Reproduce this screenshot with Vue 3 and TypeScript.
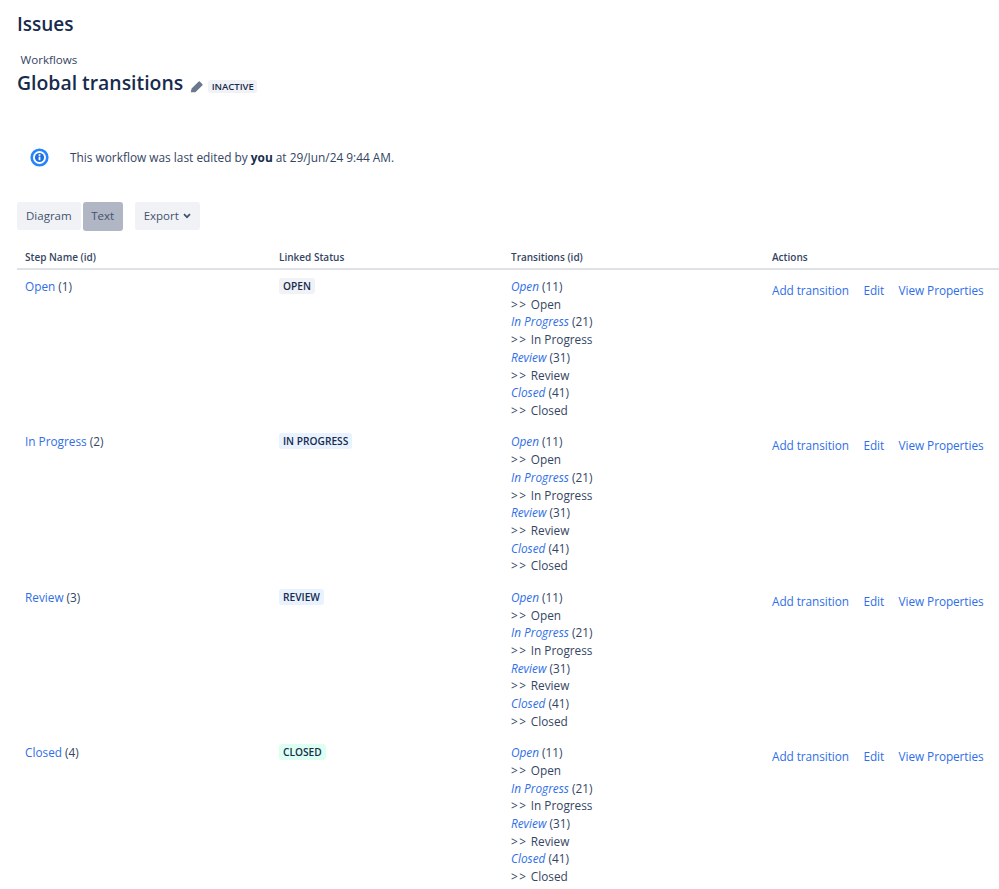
<script setup lang="ts">
interface Step { name: string; id: number; status: string; tone: string }
const steps: Step[] = [
  { name: 'Open', id: 1, status: 'OPEN', tone: 'grey' },
  { name: 'In Progress', id: 2, status: 'IN PROGRESS', tone: 'blue' },
  { name: 'Review', id: 3, status: 'REVIEW', tone: 'blue' },
  { name: 'Closed', id: 4, status: 'CLOSED', tone: 'green' },
]
const transitions = [
  { name: 'Open', id: 11 },
  { name: 'In Progress', id: 21 },
  { name: 'Review', id: 31 },
  { name: 'Closed', id: 41 },
]
</script>

<template>
  <div class="page">
    <h1 class="product">Issues</h1>
    <div class="crumb">Workflows</div>
    <div class="title-row">
      <h2 class="title">Global transitions</h2>
      <svg class="pencil" width="13" height="13" viewBox="0 0 14 14" aria-hidden="true">
        <path d="M.8 13.2l.9-4 7.4-7.4a1.2 1.2 0 0 1 1.7 0l2.4 2.4a1.2 1.2 0 0 1 0 1.7l-7.4 7.4z" fill="#6b778c" />
      </svg>
      <span class="lozenge grey small">INACTIVE</span>
    </div>
    <div class="notice">
      <svg class="info" width="19" height="19" viewBox="0 0 19 19" aria-hidden="true">
        <circle cx="9.5" cy="9.5" r="7.8" fill="#fff" stroke="#2684ff" stroke-width="2.6" />
        <circle cx="9.5" cy="9.5" r="4.6" fill="#1d6fe0" />
        <rect x="8.6" y="8.6" width="1.8" height="3.6" fill="#fff" />
        <rect x="8.6" y="6.2" width="1.8" height="1.7" fill="#fff" />
      </svg>
      <span>This workflow was last edited by <b>you</b> at 29/Jun/24 9:44 AM.</span>
    </div>
    <div class="toolbar">
      <div class="group">
        <button class="btn" type="button">Diagram</button>
        <button class="btn active" type="button">Text</button>
      </div>
      <button class="btn export" type="button">
        Export
        <svg width="8" height="6" viewBox="0 0 8 6" aria-hidden="true">
          <path d="M1 1.2l3 3 3-3" fill="none" stroke="#42526e" stroke-width="1.7" />
        </svg>
      </button>
    </div>
    <table class="grid">
      <colgroup>
        <col class="c1" /><col class="c2" /><col class="c3" /><col />
      </colgroup>
      <thead>
        <tr>
          <th>Step Name (id)</th>
          <th>Linked Status</th>
          <th>Transitions (id)</th>
          <th>Actions</th>
        </tr>
      </thead>
      <tbody>
        <tr v-for="s in steps" :key="s.id">
          <td><a>{{ s.name }}</a> ({{ s.id }})</td>
          <td><span class="lozenge status" :class="s.tone">{{ s.status }}</span></td>
          <td>
            <template v-for="t in transitions" :key="t.id">
              <div><a class="em">{{ t.name }}</a> ({{ t.id }})</div>
              <div><span class="arrows">&gt;&gt;</span> {{ t.name }}</div>
            </template>
          </td>
          <td>
            <div class="actions"><a>Add transition</a><a>Edit</a><a>View Properties</a></div>
          </td>
        </tr>
      </tbody>
    </table>
  </div>
</template>

<style>
html, body { margin: 0; background: #fff; overflow: hidden; }
</style>

<style scoped>
.page {
  width: 999px;
  height: 889px;
  box-sizing: border-box;
  overflow: hidden;
  padding: 11px 0 0 17px;
  font-family: "Open Sans", "Noto Sans", sans-serif;
  font-size: 11.8px;
  line-height: 17.7px;
  color: #172b4d;
}
.product { margin: 0; font-size: 19px; line-height: 26px; font-weight: 600; }
.crumb { margin: 14px 0 0 3.5px; font-size: 11.6px; line-height: 18px; color: #344563; }
.title-row { display: flex; align-items: center; height: 28px; margin-top: -1px; }
.title { margin: 2px 0 0; font-size: 19.4px; line-height: 28px; font-weight: 600; }
.pencil { margin: 9px 0 0 7px; }
.lozenge {
  display: inline-block;
  padding: 0 4px;
  border-radius: 3px;
  font-size: 10.2px;
  line-height: 16px;
  font-weight: 600;
  color: #172b4d;
}
.status { display: block; width: fit-content; }
.small { margin: 8px 0 0 5px; padding: 0 3.5px; font-size: 9.5px; line-height: 13px; }
.grey { background: #f1f2f5; }
.blue { background: #e9f2ff; }
.green { background: #dcfff1; }
.notice {
  display: flex;
  align-items: center;
  margin: 44px 0 0 13px;
  height: 36px;
  font-size: 11.87px;
  color: #344563;
}
.info { margin: 0 21px 2px 0; flex: none; }
.notice b { color: #172b4d; }
.toolbar { display: flex; margin-top: 26px; gap: 12px; }
.group { display: flex; gap: 2px; }
.btn {
  height: 28px;
  padding: 0 9px;
  border: 0;
  border-radius: 3px;
  background: #f1f2f5;
  color: #42526e;
  font: inherit;
  font-size: 11.5px;
}
.active { background: #b0b6c4; width: 40px; height: 29px; padding: 0 0 1px; }
.export { display: flex; align-items: center; gap: 4px; }
.grid {
  width: 982px;
  margin-top: 18px;
  table-layout: fixed;
  border-collapse: collapse;
}
.c1 { width: 254px; }
.c2 { width: 232px; }
.c3 { width: 261px; }
th {
  text-align: left;
  padding: 0 8px 1px;
  height: 18px;
  font-size: 10px;
  font-weight: 600;
  color: #344563;
  border-bottom: 2px solid #dfe1e6;
}
td { padding: 8px 8px 5.8px; vertical-align: top; color: #344563; }
a { color: #2f6fe6; }
.em { font-style: italic; }
.arrows { letter-spacing: 1.6px; }
.actions { display: flex; gap: 14.5px; margin-top: 4px; letter-spacing: -0.07px; white-space: nowrap; }
</style>
